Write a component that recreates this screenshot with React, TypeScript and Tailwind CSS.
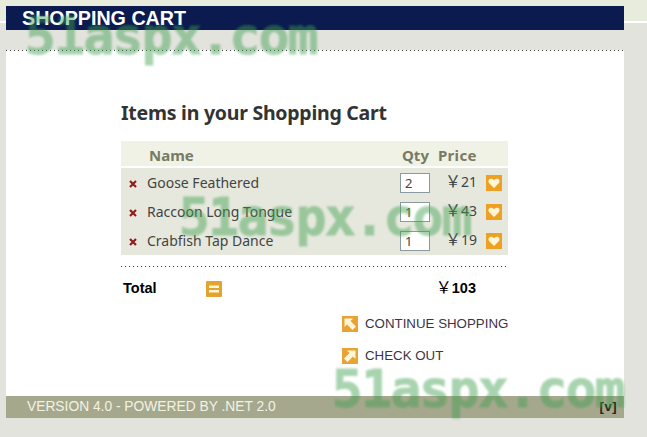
const items = [
  { name: "Goose Feathered", qty: "2", price: "21" },
  { name: "Raccoon Long Tongue", qty: "1", price: "43" },
  { name: "Crabfish Tap Dance", qty: "1", price: "19" },
];

function RemoveIcon() {
  return (
    <svg width="8" height="8" viewBox="0 0 8 8" className="shrink-0">
      <path d="M1 1 L7 7 M7 1 L1 7" stroke="#8f1d1d" strokeWidth="2.2" />
    </svg>
  );
}

function HeartIcon() {
  return (
    <svg width="16" height="16" viewBox="0 0 16 16" className="shrink-0">
      <rect width="16" height="16" fill="#eda021" />
      <path d="M8 13 L3 8 C1.6 6 3 3.6 5.2 3.8 C6.6 3.9 7.4 4.6 8 5.4 C8.6 4.6 9.4 3.9 10.8 3.8 C13 3.6 14.4 6 13 8 Z" fill="#fff6d8" />
    </svg>
  );
}

function EqualIcon() {
  return (
    <svg width="16" height="16" viewBox="0 0 16 16" className="shrink-0">
      <rect width="16" height="16" rx="1" fill="#e3a32f" />
      <rect x="3" y="4.5" width="10" height="2.5" fill="#fff6d8" />
      <rect x="3" y="9" width="10" height="2.5" fill="#fff6d8" />
    </svg>
  );
}

function ArrowIcon({ flip }: { flip?: boolean }) {
  return (
    <svg width="16" height="16" viewBox="0 0 16 16" className={flip ? "shrink-0 -scale-x-100" : "shrink-0"}>
      <rect width="16" height="16" fill="#e9a334" />
      <path d="M2.5 2.5 H11 L8.5 5 L14 10.5 L10.5 14 L5 8.5 L2.5 11 Z" fill="#fff6d8" />
    </svg>
  );
}

function Yen() {
  return <span className="font-['Noto_Sans_CJK_SC',sans-serif] text-[16px] leading-none font-normal">￥</span>;
}

function Watermark({ className }: { className: string }) {
  return (
    <div className={"absolute font-['DejaVu_Sans_Mono',monospace] font-bold text-[51px] leading-none tracking-[-1.5px] text-[#3f9f4f] opacity-45 blur-[1.2px] [-webkit-text-stroke:1px_#3f9f4f] pointer-events-none " + className}>
      51aspx.com
    </div>
  );
}

export default function App() {
  return (
    <div className="relative w-[647px] h-[437px] overflow-hidden px-[6px] pt-[6px] font-['Liberation_Sans',sans-serif] bg-[linear-gradient(#e8ecdc_0,#e8ecdc_21px,#ffffff_21px,#ffffff_23px,#e1e3dc_23px)]">
      <div className="w-[618px] flex flex-col">
        <div className="h-[24px] bg-[#0b1b50] pl-[16px] text-white font-bold text-[19.7px] leading-[24px]">SHOPPING CART</div>
        <div className="h-[20px] bg-[#e1e3dc]" />
        <div className="h-[1px] bg-white bg-[repeating-linear-gradient(90deg,#333_0,#333_1px,transparent_1px,transparent_4px)]" />
        <div className="h-[345px] bg-white flex flex-col pl-[115px]">
          <h1 className="mt-[50px] h-[24px] text-[19.5px] leading-[24px] font-bold text-[#333] font-['Noto_Sans',sans-serif] tracking-[-0.25px]">Items in your Shopping Cart</h1>

          <div className="mt-[16px] w-[387px] font-['Noto_Sans',sans-serif]">
            <div className="h-[25px] pt-[3px] bg-[#f0f2e6] flex items-center font-bold text-[15px] text-[#777b63]">
              <div className="ml-[28px] w-[253px]">Name</div>
              <div className="w-[36px]">Qty</div>
              <div className="tracking-[0.3px]">Price</div>
            </div>
            <div className="mt-[2px] h-[87px] bg-[#e6e8dd] flex flex-col justify-center text-[14px] text-[#444]">
              {items.map((it) => (
                <div key={it.name} className="h-[29px] flex items-center">
                  <div className="ml-[8px] mt-[2px]"><RemoveIcon /></div>
                  <div className="ml-[10px] w-[253px]">{it.name}</div>
                  <div className="w-[30px] h-[20px] bg-white border border-[#8a9a9e] pl-[4px] text-[13px] leading-[18px]">{it.qty}</div>
                  <div className="w-[47px] text-right -mt-[2px]"><Yen />{it.price}</div>
                  <div className="ml-[9px]"><HeartIcon /></div>
                </div>
              ))}
            </div>
          </div>

          <div className="mt-[11px] w-[385px] h-[1px] bg-[repeating-linear-gradient(90deg,#333_0,#333_1px,transparent_1px,transparent_4px)]" />

          <div className="mt-[11px] w-[355px] flex items-center font-bold text-[14.5px] text-black">
            <div className="ml-[2px] w-[83px]">Total</div>
            <EqualIcon />
            <div className="ml-auto"><Yen />103</div>
          </div>

          <div className="mt-[14px] ml-[221px] flex items-center gap-[7px] text-[13.3px] text-[#3d3345]">
            <ArrowIcon />
            CONTINUE SHOPPING
          </div>
          <div className="mt-[12px] ml-[221px] flex items-center gap-[7px] text-[13.3px] text-[#3d3345]">
            <ArrowIcon flip />
            CHECK OUT
          </div>
        </div>
        <div className="h-[22px] bg-[#a6a88e] flex items-center justify-between pl-[21px] pr-[7px] text-[13.8px] text-[#f2f2e2]">
          <span>VERSION 4.0 - POWERED BY .NET 2.0</span>
          <span className="text-[13px] tracking-[0.5px] font-bold text-[#1f2a1c]">[v]</span>
        </div>
      </div>
      <Watermark className="left-[25px] top-[11px]" />
      <Watermark className="left-[179px] top-[192px]" />
      <Watermark className="left-[332px] top-[364px]" />
    </div>
  );
}
